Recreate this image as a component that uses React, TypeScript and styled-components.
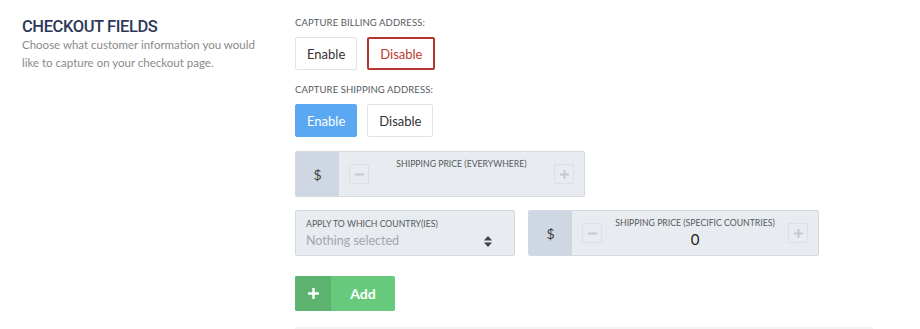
import styled, { createGlobalStyle } from "styled-components"

const GlobalStyle = createGlobalStyle`
  body {
    margin: 0;
    background: #ffffff;
    font-family: Lato, "Open Sans", "Liberation Sans", sans-serif;
  }
`

const Page = styled.div`
  display: flex;
  width: 920px;
  height: 329px;
  overflow: hidden;
`

const Intro = styled.div`
  width: 295px;
  box-sizing: border-box;
  padding: 17px 30px 0 22px;
  flex-shrink: 0;
`

const Title = styled.h2`
  margin: 0;
  font-family: Roboto, "Liberation Sans", sans-serif;
  font-size: 16.5px;
  line-height: 19px;
  font-weight: 500;
  color: #2c3959;
  letter-spacing: -0.4px;
`

const Description = styled.p`
  margin: 0;
  font-size: 11.5px;
  line-height: 18px;
  color: #8a8a8a;
`

const Settings = styled.div`
  width: 578px;
  padding-top: 17px;
  display: flex;
  flex-direction: column;
`

const FieldLabel = styled.div`
  font-size: 9.5px;
  line-height: 12px;
  color: #555a60;
  text-transform: uppercase;
  letter-spacing: 0.1px;
`

const Toggle = styled.div`
  display: flex;
  gap: 10px;
  margin: 8px 0 14px;
`

const ToggleButton = styled.button<{ $tone?: "active" | "danger" }>`
  height: 33px;
  padding: 0 11px;
  font-family: inherit;
  font-size: 13px;
  border-radius: 2px;
  cursor: pointer;
  background: ${(p) => (p.$tone === "active" ? "#5aa8f1" : "#ffffff")};
  color: ${(p) =>
    p.$tone === "active" ? "#ffffff" : p.$tone === "danger" ? "#bb3a32" : "#333333"};
  border: ${(p) =>
    p.$tone === "danger"
      ? "2px solid #b5362e"
      : p.$tone === "active"
        ? "1px solid #5aa8f1"
        : "1px solid #e3e3e3"};
`

const PriceBox = styled.div<{ $width: number }>`
  display: flex;
  width: ${(p) => p.$width}px;
  height: 46px;
  border: 1px solid #d3d9e0;
  border-radius: 2px;
  background: #e8ebef;
  box-sizing: border-box;
`

const Currency = styled.div`
  width: 43px;
  display: flex;
  align-items: center;
  justify-content: center;
  background: #cfd8e2;
  color: #3a3f45;
  font-size: 14px;
`

const Stepper = styled.div`
  flex: 1;
  display: flex;
  align-items: center;
  padding: 0 10px;
`

const StepButton = styled.div`
  width: 20px;
  height: 20px;
  border: 1px solid #dde1e6;
  box-sizing: border-box;
  display: flex;
  align-items: center;
  justify-content: center;
`

const StepCenter = styled.div`
  flex: 1;
  align-self: stretch;
  display: flex;
  flex-direction: column;
  align-items: center;
  padding-top: 6px;
`

const StepLabel = styled.div`
  font-size: 8.7px;
  line-height: 12px;
  color: #555a60;
  text-transform: uppercase;
`

const StepValue = styled.div`
  font-size: 15px;
  line-height: 18px;
  color: #222;
  margin-top: 1px;
`

const Row = styled.div`
  display: flex;
  gap: 13px;
  margin-top: 13px;
`

const SelectBox = styled.div`
  width: 220px;
  height: 46px;
  box-sizing: border-box;
  border: 1px solid #d3d9e0;
  border-radius: 2px;
  background: #e8ebef;
  padding: 7px 10px 0;
`

const SelectLine = styled.div`
  display: flex;
  align-items: center;
  justify-content: space-between;
  margin-top: 3px;
  padding-right: 12px;
`

const Placeholder = styled.span`
  font-size: 12.5px;
  line-height: 16px;
  color: #a2a7ad;
`

const AddButton = styled.button`
  display: flex;
  align-items: stretch;
  width: 100px;
  height: 35px;
  margin-top: 20px;
  padding: 0;
  border: none;
  border-radius: 2px;
  overflow: hidden;
  background: #66c97c;
  color: #ffffff;
  font-family: inherit;
  font-size: 14px;
  font-weight: 700;
  cursor: pointer;
`

const AddIcon = styled.span`
  width: 36px;
  display: flex;
  align-items: center;
  justify-content: center;
  background: #5cb26f;
`

const AddText = styled.span`
  flex: 1;
  display: flex;
  align-items: center;
  justify-content: center;
`

const Divider = styled.div`
  height: 2px;
  background: #f3f3f3;
  margin-top: 16px;
`

const Minus = () => (
  <svg width='9' height='9' viewBox='0 0 9 9'>
    <rect x='0' y='3.5' width='9' height='2' fill='#c3c8ce' />
  </svg>
)

const Plus = ({ color = "#c3c8ce", size = 9 }: { color?: string; size?: number }) => (
  <svg width={size} height={size} viewBox='0 0 9 9'>
    <rect x='0' y='3.5' width='9' height='2' fill={color} />
    <rect x='3.5' y='0' width='2' height='9' fill={color} />
  </svg>
)

const SortArrows = () => (
  <svg width='8' height='11' viewBox='0 0 8 11'>
    <path d='M4 0 L8 4.5 L0 4.5 Z' fill='#3b4250' />
    <path d='M0 6.5 L8 6.5 L4 11 Z' fill='#3b4250' />
  </svg>
)

const PriceStepper = ({ label, value, width }: { label: string; value?: string; width: number }) => (
  <PriceBox $width={width}>
    <Currency>$</Currency>
    <Stepper>
      <StepButton>
        <Minus />
      </StepButton>
      <StepCenter>
        <StepLabel>{label}</StepLabel>
        {value && <StepValue>{value}</StepValue>}
      </StepCenter>
      <StepButton>
        <Plus />
      </StepButton>
    </Stepper>
  </PriceBox>
)

export default function App() {
  return (
    <>
      <GlobalStyle />
      <Page>
        <Intro>
          <Title>CHECKOUT FIELDS</Title>
          <Description>
            Choose what customer information you would like to capture on your checkout page.
          </Description>
        </Intro>

        <Settings>
          <FieldLabel>Capture billing address:</FieldLabel>
          <Toggle>
            <ToggleButton>Enable</ToggleButton>
            <ToggleButton $tone='danger'>Disable</ToggleButton>
          </Toggle>

          <FieldLabel>Capture shipping address:</FieldLabel>
          <Toggle>
            <ToggleButton $tone='active'>Enable</ToggleButton>
            <ToggleButton>Disable</ToggleButton>
          </Toggle>

          <PriceStepper label='Shipping price (everywhere)' width={290} />

          <Row>
            <SelectBox>
              <StepLabel>Apply to which country(ies)</StepLabel>
              <SelectLine>
                <Placeholder>Nothing selected</Placeholder>
                <SortArrows />
              </SelectLine>
            </SelectBox>
            <PriceStepper label='Shipping price (specific countries)' value='0' width={291} />
          </Row>

          <AddButton>
            <AddIcon>
              <Plus color='#ffffff' size={11} />
            </AddIcon>
            <AddText>Add</AddText>
          </AddButton>

          <Divider />
        </Settings>
      </Page>
    </>
  )
}
